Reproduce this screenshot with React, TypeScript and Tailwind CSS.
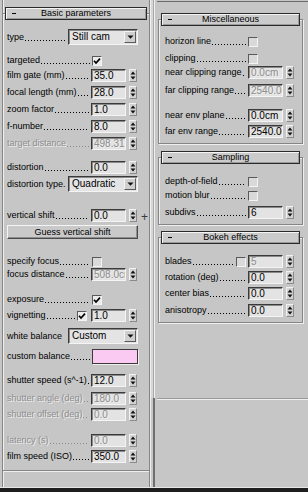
import React from "react";

const DIS = "text-[#8d8d8d] [text-shadow:1px_1px_0_#efefef]";

function Lbl({ t, cls, dis, dots = true }: { t: string; cls: string; dis?: boolean; dots?: boolean }) {
  return (
    <div className={`${cls} flex items-end shrink-0 h-[13px] ${dis ? DIS : "text-black"}`}>
      <span className="whitespace-nowrap text-[9px] leading-[13px]">{t}</span>
      {dots ? (
        <span className="flex-1 h-[1px] mb-[3px] ml-[1px] bg-[linear-gradient(to_right,currentColor_1px,transparent_1px)] bg-[length:3px_1px] bg-repeat-x" />
      ) : null}
    </div>
  );
}

function Arrows() {
  return (
    <div className="ml-[3px] w-[8px] h-[13px] bg-[#d2d2d2] border-l border-t border-l-[#f2f2f2] border-t-[#f2f2f2] border-r border-b border-r-[#8a8a8a] border-b-[#8a8a8a] flex items-center justify-center">
      <svg width="6" height="11" viewBox="0 0 6 11">
        <path d="M3 1.5 L0.5 4.5 H5.5 Z" fill="#111" />
        <path d="M3 9.5 L0.5 6.5 H5.5 Z" fill="#111" />
      </svg>
    </div>
  );
}

function Field({ v, dis }: { v: string; dis?: boolean }) {
  return (
    <div
      className={`w-[35px] h-[13px] bg-[#e3e3e3] border border-t-[#3a3a3a] border-l-[#3a3a3a] border-r-[#f4f4f4] border-b-[#f4f4f4] shadow-[inset_1px_1px_0_#8a8a8a] pl-[2px] overflow-hidden whitespace-nowrap text-[10px] leading-[11px] ${dis ? DIS : "text-black"}`}
    >
      {v}
    </div>
  );
}

function Spin({ v, dis }: { v: string; dis?: boolean }) {
  return (
    <div className="flex items-center">
      <Field v={v} dis={dis} />
      <Arrows />
    </div>
  );
}

function Check({ on, dis }: { on?: boolean; dis?: boolean }) {
  return (
    <div
      className={`w-[10px] h-[10px] shrink-0 border border-t-[#5a5a5a] border-l-[#5a5a5a] border-r-[#f4f4f4] border-b-[#f4f4f4] flex items-center justify-center ${dis ? "bg-[#d9d9d9]" : "bg-[#ececec]"}`}
    >
      {on ? (
        <svg width="8" height="8" viewBox="0 0 8 8">
          <path d="M1 3.8 L3 6 L7 1.6" stroke="#000" strokeWidth="1.7" fill="none" />
        </svg>
      ) : null}
    </div>
  );
}

function Drop({ v }: { v: string }) {
  return (
    <div className="w-[70px] h-[16px] bg-[#e4e4e4] border border-t-[#3a3a3a] border-l-[#3a3a3a] border-r-[#f4f4f4] border-b-[#f4f4f4] shadow-[inset_1px_1px_0_#8a8a8a] flex items-center">
      <span className="flex-1 pl-[3px] text-[10px] leading-[12px] text-black whitespace-nowrap">{v}</span>
      <div className="w-[12px] h-[12px] mr-[1px] bg-[#cfcfcf] border border-t-[#f4f4f4] border-l-[#f4f4f4] border-r-[#5a5a5a] border-b-[#5a5a5a] flex items-center justify-center">
        <svg width="7" height="4" viewBox="0 0 7 4">
          <path d="M0.5 0.5 H6.5 L3.5 3.8 Z" fill="#111" />
        </svg>
      </div>
    </div>
  );
}

function Header({ t }: { t: string }) {
  return (
    <div className="-mt-[7px] mx-[2px] h-[13px] border border-[#2a2a2a] bg-[#cbcbcb] shadow-[inset_1px_1px_0_#f4f4f4,inset_-1px_-1px_0_#9a9a9a] flex items-center">
      <div className="w-[14px] shrink-0 flex">
        <div className="ml-[6px] w-[4px] h-[1px] bg-black" />
      </div>
      <span className="flex-1 text-center pr-[14px] text-[9px] leading-[11px] text-black whitespace-nowrap">{t}</span>
    </div>
  );
}

const ROW = "flex items-center h-[13px]";

function LeftCol() {
  return (
    <div className="ml-[2px] w-[148px] h-[487px] border-l border-r border-l-[#858585] border-r-[#858585] shadow-[inset_1px_0_0_#efefef,1px_0_0_#efefef] flex flex-col">
      <div className="mt-[13px] h-[458px] border-t border-b border-[#858585] shadow-[inset_0_1px_0_#efefef,0_1px_0_#efefef] flex flex-col pl-[4px]">
        <div className="-ml-[4px]">
          <Header t="Basic parameters" />
        </div>
        <div className="mt-[9px] flex items-center h-[16px]">
          <Lbl t="type" cls="w-[59px] mr-[2px]" />
          <Drop v="Still cam" />
        </div>
        <div className={`mt-[9px] ${ROW}`}>
          <Lbl t="targeted" cls="w-[83px] mr-[2px]" />
          <Check on />
        </div>
        <div className={`mt-[2px] ${ROW}`}>
          <Lbl t="film gate (mm)" cls="w-[82px] mr-[2px]" />
          <Spin v="35.0" />
        </div>
        <div className={`mt-[4px] ${ROW}`}>
          <Lbl t="focal length (mm)" cls="w-[82px] mr-[2px]" />
          <Spin v="28.0" />
        </div>
        <div className={`mt-[4px] ${ROW}`}>
          <Lbl t="zoom factor" cls="w-[82px] mr-[2px]" />
          <Spin v="1.0" />
        </div>
        <div className={`mt-[4px] ${ROW}`}>
          <Lbl t="f-number" cls="w-[82px] mr-[2px]" />
          <Spin v="8.0" />
        </div>
        <div className={`mt-[4px] ${ROW}`}>
          <Lbl t="target distance" cls="w-[82px] mr-[2px]" dis />
          <Spin v="498.31." dis />
        </div>
        <div className={`mt-[11px] ${ROW}`}>
          <Lbl t="distortion" cls="w-[82px] mr-[2px]" />
          <Spin v="0.0" />
        </div>
        <div className="mt-[2px] flex items-center h-[16px]">
          <Lbl t="distortion type." cls="w-[59px] mr-[2px]" dots={false} />
          <Drop v="Quadratic" />
        </div>
        <div className={`mt-[17px] ${ROW}`}>
          <Lbl t="vertical shift" cls="w-[82px] mr-[2px]" />
          <Spin v="0.0" />
          <span className="ml-[4px] mt-[3px] text-[12px] leading-[12px] text-[#3a3a3a]">+</span>
        </div>
        <div className="mt-[3px] flex">
          <div className="w-[131px] h-[14px] bg-[#c9c9c9] border border-t-[#f4f4f4] border-l-[#f4f4f4] border-r-[#4a4a4a] border-b-[#4a4a4a] shadow-[inset_-1px_-1px_0_#8e8e8e] flex items-center justify-center text-[9px] leading-[11px] text-black">
            Guess vertical shift
          </div>
        </div>
        <div className={`mt-[16px] ${ROW}`}>
          <Lbl t="specify focus" cls="w-[83px] mr-[2px]" />
          <Check dis />
        </div>
        <div className={`mt-[0px] ${ROW}`}>
          <Lbl t="focus distance" cls="w-[82px] mr-[2px]" />
          <Spin v="508.0cm" dis />
        </div>
        <div className={`mt-[12px] ${ROW}`}>
          <Lbl t="exposure" cls="w-[83px] mr-[2px]" />
          <Check on />
        </div>
        <div className={`mt-[3px] ${ROW}`}>
          <Lbl t="vignetting" cls="w-[68px] mr-[2px]" />
          <Check on />
          <div className="ml-[4px]">
            <Spin v="1.0" />
          </div>
        </div>
        <div className="mt-[6px] flex items-center h-[16px]">
          <Lbl t="white balance" cls="w-[59px] mr-[2px]" dots={false} />
          <Drop v="Custom" />
        </div>
        <div className="mt-[5px] flex items-center h-[15px]">
          <Lbl t="custom balance" cls="w-[83px] mr-[2px]" />
          <div className="w-[46px] h-[15px] bg-[#fbcaf3] border border-[#3a3a3a] shadow-[1px_1px_0_#f0f0f0]" />
        </div>
        <div className={`mt-[10px] ${ROW}`}>
          <Lbl t="shutter speed (s^-1)" cls="w-[82px] mr-[2px]" />
          <Spin v="12.0" />
        </div>
        <div className={`mt-[5px] ${ROW}`}>
          <Lbl t="shutter angle (deg)" cls="w-[82px] mr-[2px]" dis />
          <Spin v="180.0" dis />
        </div>
        <div className={`mt-[3px] ${ROW}`}>
          <Lbl t="shutter offset (deg)" cls="w-[82px] mr-[2px]" dis />
          <Spin v="0.0" dis />
        </div>
        <div className={`mt-[13px] ${ROW}`}>
          <Lbl t="latency (s)" cls="w-[82px] mr-[2px]" dis />
          <Spin v="0.0" dis />
        </div>
        <div className={`mt-[3px] ${ROW}`}>
          <Lbl t="film speed (ISO)" cls="w-[82px] mr-[2px]" />
          <Spin v="350.0" />
        </div>
      </div>
    </div>
  );
}

function RBox({ t, cls, children }: { t: string; cls: string; children: React.ReactNode }) {
  return (
    <div className={`${cls} ml-[1px] w-[145px] border border-[#858585] shadow-[inset_1px_1px_0_#efefef,1px_1px_0_#efefef] flex flex-col`}>
      <Header t={t} />
      <div className="flex flex-col pl-[6px]">{children}</div>
    </div>
  );
}

function RightCol() {
  return (
    <div className="flex-1 h-[487px] border-t border-t-[#6a6a6a] mt-[1px] flex flex-col">
      <RBox t="Miscellaneous" cls="mt-[17px] h-[125px]">
        <div className={`mt-[9px] ${ROW}`}>
          <Lbl t="horizon line" cls="w-[81px] mr-[2px]" />
          <Check dis />
        </div>
        <div className={`mt-[4px] ${ROW}`}>
          <Lbl t="clipping" cls="w-[81px] mr-[2px]" />
          <Check dis />
        </div>
        <div className={`mt-[1px] ${ROW}`}>
          <Lbl t="near clipping range" cls="w-[81px] mr-[2px]" />
          <Spin v="0.0cm" dis />
        </div>
        <div className={`mt-[5px] ${ROW}`}>
          <Lbl t="far clipping range" cls="w-[81px] mr-[2px]" />
          <Spin v="2540.0cm" dis />
        </div>
        <div className={`mt-[12px] ${ROW}`}>
          <Lbl t="near env plane" cls="w-[81px] mr-[2px]" />
          <Spin v="0.0cm" />
        </div>
        <div className={`mt-[3px] ${ROW}`}>
          <Lbl t="far env range" cls="w-[81px] mr-[2px]" />
          <Spin v="2540.0cm" />
        </div>
      </RBox>
      <RBox t="Sampling" cls="mt-[13px] h-[68px]">
        <div className={`mt-[11px] ${ROW}`}>
          <Lbl t="depth-of-field" cls="w-[81px] mr-[2px]" />
          <Check dis />
        </div>
        <div className={`mt-[1px] ${ROW}`}>
          <Lbl t="motion blur" cls="w-[81px] mr-[2px]" />
          <Check dis />
        </div>
        <div className={`mt-[4px] ${ROW}`}>
          <Lbl t="subdivs" cls="w-[81px] mr-[2px]" />
          <Spin v="6" />
        </div>
      </RBox>
      <RBox t="Bokeh effects" cls="mt-[12px] h-[86px]">
        <div className={`mt-[11px] ${ROW}`}>
          <Lbl t="blades" cls="w-[69px] mr-[2px]" />
          <Check dis />
          <div className="ml-[2px]">
            <Spin v="5" dis />
          </div>
        </div>
        <div className={`mt-[3px] ${ROW}`}>
          <Lbl t="rotation (deg)" cls="w-[81px] mr-[2px]" />
          <Spin v="0.0" />
        </div>
        <div className={`mt-[3px] ${ROW}`}>
          <Lbl t="center bias" cls="w-[81px] mr-[2px]" />
          <Spin v="0.0" />
        </div>
        <div className={`mt-[4px] ${ROW}`}>
          <Lbl t="anisotropy" cls="w-[81px] mr-[2px]" />
          <Spin v="0.0" />
        </div>
      </RBox>
      <div className="mt-[75px] h-[2px] border-t border-t-[#9a9a9a] border-b border-b-[#eeeeee]" />
    </div>
  );
}

export default function App() {
  return (
    <div className="w-[308px] h-[492px] bg-[#c6c6c6] flex flex-col overflow-hidden font-['Liberation_Sans',Arial,sans-serif]">
      <div className="flex h-[487px]">
        <LeftCol />
        <div className="w-[6px] h-[487px] flex flex-col ml-[1px]">
          <div className="h-[398px] flex">
            <div className="w-[2px] bg-[#d6d6d6]" />
            <div className="w-[1px] bg-[#a8a8a8]" />
            <div className="w-[1px] bg-[#f0f0f0]" />
          </div>
          <div className="flex-1 flex">
            <div className="w-[2px] bg-[#c6c6c6]" />
            <div className="w-[2px] bg-[#6e6e6e]" />
          </div>
        </div>
        <RightCol />
      </div>
      <div className="h-[1px] bg-[#e6e6e6]" />
      <div className="flex-1 bg-[#1e1e1e]" />
    </div>
  );
}
